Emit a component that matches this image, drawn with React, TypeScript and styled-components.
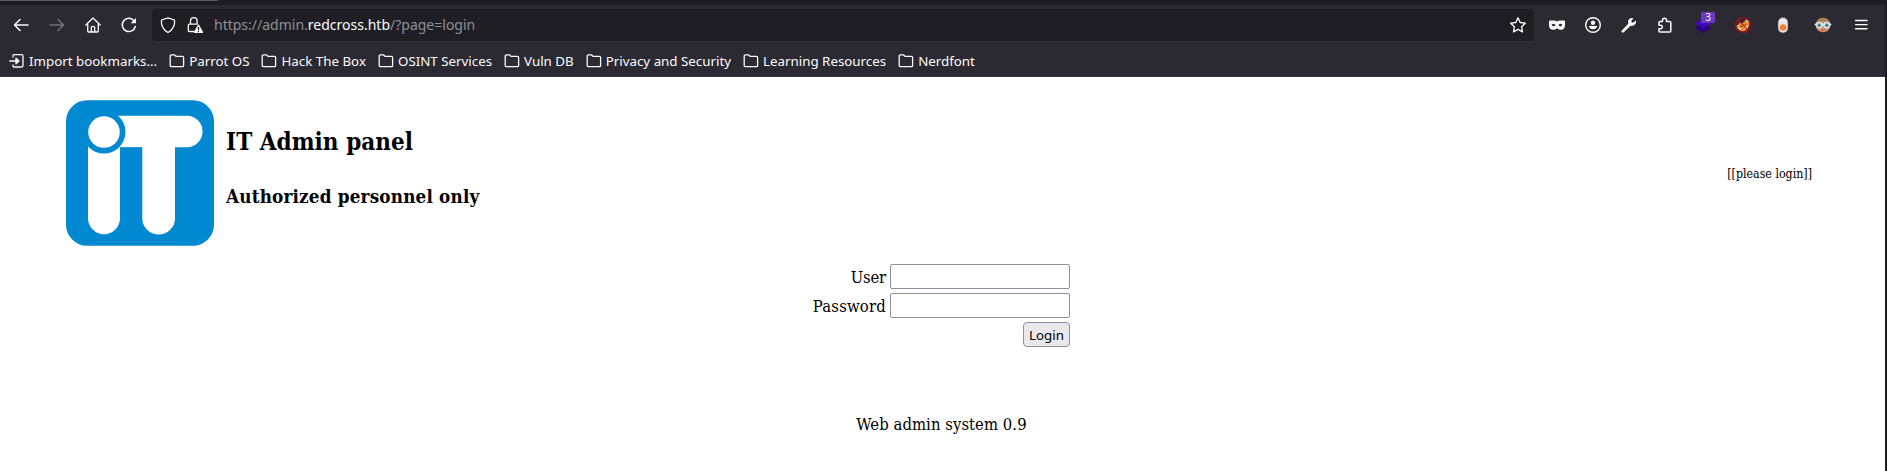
import React from "react";
import styled, { createGlobalStyle } from "styled-components";

const Global = createGlobalStyle`
  * { box-sizing: border-box; }
  body { margin: 0; background: #fff; }
`;
const serif = `"DejaVu Serif Condensed", "DejaVu Serif", serif`;
const Window = styled.div`
  display: flex; flex-direction: column; width: 100%; height: 471px; overflow: hidden;
  background: #fff; border-right: 2px solid #1c1b22;
`;
const TabEdge = styled.div`
  height: 5px; background: #1c1b22; flex: none;
  &::before { content: ""; display: block; width: 218px; height: 1px; background: #5b5966; }
`;
const NavBar = styled.div`
  height: 40px; flex: none; background: #2b2a33; display: flex; align-items: center; padding-left: 3px;
`;
const NavButton = styled.span<{ $dim?: boolean; $w?: number }>`
  position: relative;
  width: ${p => p.$w ?? 36}px; display: flex; justify-content: center; flex: none;
  color: ${p => (p.$dim ? "#73727a" : "#fbfbfe")};
  svg { display: block; overflow: visible; }
`;
const Badge = styled.span`
  position: absolute; top: -5px; left: 18px; width: 14px; height: 11px; border-radius: 1px; background: #6a3bbd;
  color: #fff; font: 10px/11px "Noto Sans", sans-serif; text-align: center;
`;
const AddressBar = styled.div`
  width: 1382px; height: 32px; background: #1f1e25; border-radius: 4px; margin-left: 5px;
  display: flex; align-items: center; padding: 0 8px 0 8px; color: #fbfbfe;
  svg { display: block; flex: none; overflow: visible; }
`;
const Shield = styled.span`margin-right: 11px;`;
const Url = styled.span`
  margin-left: 11px; flex: 1; font: 14px/20px "Noto Sans", sans-serif; color: #8f8f96; white-space: pre;
  b { font-weight: 400; color: #fbfbfe; }
`;
const Extensions = styled.div`display: flex; align-items: center; margin-left: 5px;`;
const Bookmarks = styled.div`
  height: 32px; flex: none; background: #2b2a33; display: flex; align-items: center; gap: 12px;
  padding: 0 0 0 9px; border-bottom: 1px solid #3b3944;
`;
const Bookmark = styled.span`
  display: flex; align-items: center; gap: 4px; color: #fbfbfe; white-space: nowrap;
  font: 13.33px/18px "Noto Sans", sans-serif;
  svg { display: block; flex: none; }
`;
const Page = styled.main`font-family: ${serif}; color: #000;`;
const Header = styled.header`
  display: flex; align-items: center; padding: 23px 73px 0 66px; height: 168px;
`;
const Titles = styled.div`flex: 1; margin: 0 0 12px 12px; white-space: nowrap;`;
const Title = styled.h1`font-size: 24px; line-height: 33px; margin: 0 0 25px; letter-spacing: 0.04px;`;
const Subtitle = styled.h2`font-size: 18.72px; line-height: 26px; margin: 0; letter-spacing: 0.19px;`;
const Status = styled.span`font-size: 12.3px; line-height: 17px; margin-top: 4px;`;
const Form = styled.div`
  width: 258px; margin: 19px 0 0 812px; display: grid; grid-template-columns: 74px 180px; column-gap: 4px; row-gap: 4px;
`;
const Label = styled.label<{ $tracking?: number }>`
  display: flex; justify-content: flex-end; font-size: 16.5px; line-height: 27px; height: 25px; white-space: nowrap;
  letter-spacing: ${p => p.$tracking ?? 0}px;
`;
const Field = styled.input`
  width: 180px; height: 25px; border: 1px solid #8f8f9d; border-radius: 2px; background: #fff; padding: 1px 3px; outline: none;
`;
const Submit = styled.button`
  grid-column: 2; justify-self: end; width: 47px; height: 25px; padding: 0; border: 1px solid #8f8f9d; border-radius: 4px;
  background: #e9e9ed; color: #000; font: 13.33px/18px "Noto Sans", sans-serif;
`;
const Footer = styled.footer`
  width: 1883px; margin-top: 66px; text-align: center; font-size: 16.5px; line-height: 24px; letter-spacing: 0.06px;
`;

const Svg = ({ children, s = 16, w = 1.3 }: { children: React.ReactNode; s?: number; w?: number }) => (
  <svg width={s} height={s} viewBox="0 0 16 16" fill="none" stroke="currentColor" strokeWidth={w} strokeLinecap="round" strokeLinejoin="round">{children}</svg>
);
const Folder = () => <Svg><path d="M1.2 3Q1.2 1.8 2.4 1.8H5.2Q6 1.8 6.4 2.6L7 3.4H13.4Q14.6 3.4 14.6 4.6V12.4Q14.6 13.6 13.4 13.6H2.4Q1.2 13.6 1.2 12.4Z" /></Svg>;
const folders = ["Parrot OS", "Hack The Box", "OSINT Services", "Vuln DB", "Privacy and Security", "Learning Resources", "Nerdfont"];

const Logo = () => (
  <svg width="148" height="146" viewBox="0 0 148 145.500">
    <rect width="148" height="145.500" rx="21" fill="#0089d0" />
    <path d="M48 15.500H122A15.800 15.800 0 0 1 122 47H109V118A16.300 16.300 0 0 1 76.300 118V47H48ZM22 40H54V118A16 16 0 0 1 22 118Z" fill="#fff" />
    <path d="M54.300 47.300H76V60H54.300Z" fill="#0089d0" />
    <circle cx="38" cy="31.800" r="21.500" fill="#0089d0" />
    <circle cx="38" cy="31.800" r="15.800" fill="#fff" />
  </svg>
);

const Extras = () => (
  <Extensions>
    <NavButton>
      <Svg><path fillRule="evenodd" d="M0 4.200Q0 3.400 1 3.400H4.500Q6.500 3.400 8 4.600Q9.500 3.400 11.500 3.400H15Q16 3.400 16 4.200V8Q16 12.800 11.800 12.800Q9.800 12.800 8 11.200Q6.200 12.800 4.200 12.800Q0 12.800 0 8ZM2.600 8.100Q4.500 10.800 6.600 8.100Q4.500 5.400 2.600 8.100ZM9.400 8.100Q11.500 10.800 13.400 8.100Q11.500 5.400 9.400 8.100Z" fill="currentColor" stroke="none" /></Svg>
    </NavButton>
    <NavButton><Svg w={1.4}><circle cx="8" cy="8" r="7.300" /><circle cx="8" cy="5.800" r="2.200" fill="currentColor" stroke="none" /><path d="M3.800 9H12.200Q11.500 12.300 8 12.300T3.800 9Z" fill="currentColor" stroke="none" /></Svg></NavButton>
    <NavButton><Svg><path d="M1.300 15.500Q-.3 14.700 .8 13.400L7.300 6.800Q6.500 3.500 8.700 1.800Q10.400.6 12.500 1.200L10.500 3.400V5.500H12.600L14.900 3.300Q15.500 5.800 13.900 7.600Q12 9.300 9.500 8.800L2.800 15.200Q2 16 1.300 15.500Z" fill="currentColor" stroke="none" /></Svg></NavButton>
    <NavButton><Svg w={1.5}><path d="M2 5.500Q2 4.500 3 4.500H5.500V3.200A2 2 0 0 1 9.500 3.200V4.500H12.800Q13.800 4.500 13.800 5.500V14Q13.800 15 12.800 15H3Q2 15 2 14V11.800H3.500A1.800 1.800 0 0 0 3.500 8.200H2Z" /></Svg></NavButton>
    <NavButton $w={40}>
      <Svg><path d="M0 10.700 8 5.500 16 10.700 8 16Z" fill="#26027e" stroke="none" /><path d="M0 6.300 8 1 16 6.300 8 11.800Z" fill="#4506b5" stroke="none" /></Svg>
      <Badge>3</Badge>
    </NavButton>
    <NavButton $w={40}>
      <Svg>
        <path d="M1.500 8.500 3.500 7.500 5 5 7 6.500 9.500 4.500 10.500 2.500 12.500 4 14.500 3.500 14 8.500 12.500 12 9 14.500 4.500 13 2 11Z" fill="#e88b32" stroke="none" />
        <path d="M3 10.500 5.500 11 7 13.800 4 12.500ZM10 9.500 13.300 8 12 11.500 9.500 12ZM11 2.500 13 3.500 12 6ZM2.500 8.500 4 8 4 10Z" fill="#f1dbc2" stroke="none" />
        <path d="M6 9.500H7M10 8H11" stroke="#623312" strokeWidth=".9" /><circle cx="8" cy="8" r="7.300" stroke="#c20d10" strokeWidth="1.100" /><path d="M2.800 2.800 13.200 13.200" stroke="#c20d10" strokeWidth="1.100" />
      </Svg>
    </NavButton>
    <NavButton $w={40}><Svg><rect x="3" y=".5" width="10" height="15.500" rx="5" fill="#ece9e7" stroke="#57555b" strokeWidth=".6" /><circle cx="8" cy="10.500" r="3.300" fill="#f58234" stroke="none" /></Svg></NavButton>
    <NavButton $w={40}>
      <Svg>
        <circle cx="8" cy="8" r="7.300" fill="#d38b66" stroke="none" /><path d="M.8 7A7.300 7.300 0 0 1 15.200 7L11 5Q8 3 5 5.500Z" fill="#a28553" stroke="none" />
        <path d="M.5 7.500H15.500" stroke="#e3e9e8" strokeWidth="1.800" /><circle cx="4.200" cy="8.200" r="2.700" fill="#5ba2ad" stroke="#e3e9e8" /><circle cx="11.800" cy="8.200" r="2.700" fill="#5ba2ad" stroke="#e3e9e8" />
        <path d="M4.200 8.200V8.300M11.800 8.200V8.300" stroke="#243e4a" /><path d="M6.500 13H9.500" stroke="#b55a49" strokeWidth=".9" />
      </Svg>
    </NavButton>
    <NavButton><Svg w={1.4}><path d="M2.600 3.500H14M2.600 7.600H14M2.600 11.700H14" /></Svg></NavButton>
  </Extensions>
);

export default function App() {
  return (
    <Window>
      <Global />
      <TabEdge />
      <NavBar>
        <NavButton><Svg w={1.5}><path d="M15 8H1.500M7 2.500 1.500 8 7 13.500" /></Svg></NavButton>
        <NavButton $dim><Svg w={1.5}><path d="M1 8H14.500M9 2.500 14.500 8 9 13.500" /></Svg></NavButton>
        <NavButton><Svg><path d="M.8 8 8 1 15.200 8M2.700 7V13.800Q2.700 15 3.800 15H12.200Q13.300 15 13.300 13.800V7M6.300 15V10.500Q6.300 9.300 8 9.300T9.700 10.500V15" /></Svg></NavButton>
        <NavButton><Svg w={1.5}><path d="M14.300 9.500A6.600 6.600 0 1 1 12.500 3.200L13.500 4.300" /><path d="M15 1V6.300H9.700Z" fill="currentColor" stroke="none" /></Svg></NavButton>
        <AddressBar>
          <Shield><Svg><path d="M8 .8 14.500 3Q15.500 11 8 15.500Q.5 11 1.500 3Z" /></Svg></Shield>
          <Svg><path d="M3.500 7V4A3.300 3.300 0 0 1 10.100 4V7M6.500 14.500H2.500Q1.300 14.500 1.300 13.300V8.500Q1.300 7.200 2.500 7.200H10" /><path d="M11.500 8 15.500 15.300H7.500Z" fill="currentColor" /><path d="M11.500 10.500V12.600M11.500 14.400V14.500" stroke="#1c1b22" /></Svg>
          <Url>https://admin.<b>redcross.htb</b>/?page=login</Url>
          <Svg><path d="M8 .8 10.200 5.500 15.300 6.200 11.600 9.700 12.500 14.900 8 12.400 3.500 14.900 4.400 9.700 .7 6.200 5.800 5.500Z" /></Svg>
        </AddressBar>
        <Extras />
      </NavBar>
      <Bookmarks>
        <Bookmark><Svg><path d="M4 4V2.500Q4 1.700 5 1.700H12.500Q14 1.700 14 3.200V12.500Q14 14 12.500 14H5Q4 14 4 13V12M.7 8H9.500" /><path d="M7 5.200 10 8 7 10.800Z" fill="currentColor" /></Svg>Import bookmarks...</Bookmark>
        {folders.map(f => <Bookmark key={f}><Folder />{f}</Bookmark>)}
      </Bookmarks>
      <Page>
        <Header><Logo /><Titles><Title>IT Admin panel</Title><Subtitle>Authorized personnel only</Subtitle></Titles><Status>[[please login]]</Status></Header>
        <Form><Label $tracking={-0.2}>User</Label><Field /><Label $tracking={0.2}>Password</Label><Field type="password" /><Submit>Login</Submit></Form>
        <Footer>Web admin system 0.9</Footer>
      </Page>
    </Window>
  );
}
